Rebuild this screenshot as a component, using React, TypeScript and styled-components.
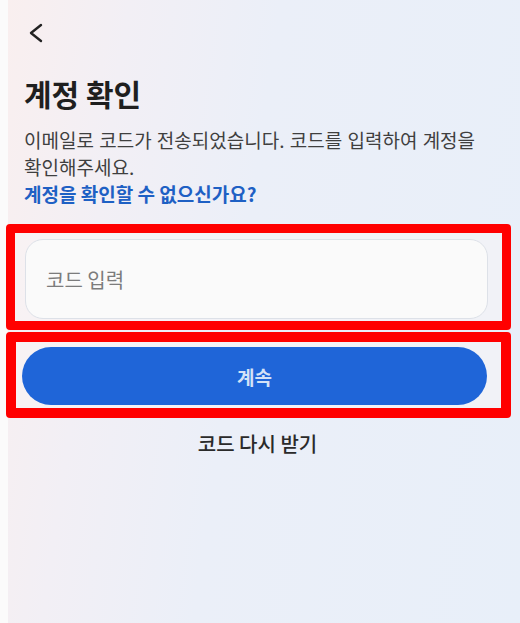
import React from "react";
import styled, { createGlobalStyle } from "styled-components";

const Global = createGlobalStyle`
  html, body { margin: 0; padding: 0; }
  body {
    width: 520px;
    height: 623px;
    overflow: hidden;
    font-family: "Noto Sans CJK KR", "Noto Sans", sans-serif;
    background: #fafafa;
  }
`;

const Page = styled.div`
  display: flex;
  width: 520px;
  height: 623px;
`;

const Gutter = styled.div<{ $side: "left" | "right" }>`
  width: ${(p) => (p.$side === "left" ? 8 : 7)}px;
  flex-shrink: 0;
  background: #fbfbfb;
  border-left: ${(p) => (p.$side === "right" ? "1px solid #dcdcdc" : "none")};
`;

const Screen = styled.div`
  flex: 1;
  display: flex;
  flex-direction: column;
  background: linear-gradient(98deg, #f9efef 0%, #f2eff5 20%, #ebeff8 45%, #e8eff9 100%);
  padding: 20px 0 0;
`;

const Content = styled.div`
  display: flex;
  flex-direction: column;
  padding: 0 16px;
`;

const BackButton = styled.button`
  border: none;
  background: none;
  padding: 0;
  margin: 0 0 0 4px;
  width: 20px;
  height: 26px;
  display: flex;
  align-items: center;
  cursor: pointer;
`;

const Title = styled.h1`
  margin: 27px 0 0;
  font-size: 30px;
  font-weight: 700;
  color: #1f1f1f;
  line-height: 40px;
`;

const Desc = styled.p`
  margin: 13px 0 0;
  max-width: 472px;
  font-size: 19px;
  line-height: 27px;
  letter-spacing: 0;
  word-spacing: 1px;
  word-break: keep-all;
  color: #3f3f3f;
`;

const HelpLink = styled.a`
  display: block;
  font-size: 19px;
  line-height: 27px;
  font-weight: 700;
  color: #1e60c4;
  text-decoration: none;
  word-break: keep-all;
`;

const Highlight = styled.div<{ $top: number; $border: number; $pad: string }>`
  margin: ${(p) => p.$top}px 0 0 -18px;
  width: 505px;
  box-sizing: border-box;
  border: ${(p) => p.$border}px solid #ff0000;
  border-radius: 4px;
  padding: ${(p) => p.$pad};
  background: rgba(250, 245, 246, 0.5);
`;

const CodeInput = styled.input`
  display: block;
  width: 100%;
  height: 80px;
  box-sizing: border-box;
  border: 1.5px solid #dde1e8;
  border-radius: 18px;
  background: #fafafa;
  padding: 0 20px;
  font-family: inherit;
  font-size: 20px;
  color: #222;
  outline: none;
  &::placeholder { color: #7c7c7c; }
`;

const PrimaryButton = styled.button`
  display: block;
  width: 100%;
  height: 58px;
  border: none;
  border-radius: 29px;
  background: #1f65d8;
  color: #d4e2f7;
  font-family: inherit;
  font-size: 19px;
  font-weight: 700;
  cursor: pointer;
`;

const TextButton = styled.button`
  align-self: center;
  margin: 7px 20px 0 0;
  border: none;
  background: none;
  font-family: inherit;
  font-size: 20px;
  line-height: 29px;
  font-weight: 500;
  color: #2a2a2a;
  cursor: pointer;
  padding: 4px 8px;
`;

export default function App() {
  return (
    <>
      <Global />
      <Page>
        <Gutter $side="left" />
        <Screen>
          <Content>
            <BackButton aria-label="뒤로">
              <svg width="16" height="20" viewBox="0 0 16 20" fill="none">
                <path d="M13 2 L3 10 L13 18" stroke="#222" strokeWidth="2.4" strokeLinecap="round" strokeLinejoin="round" />
              </svg>
            </BackButton>
            <Title>계정 확인</Title>
            <Desc>이메일로 코드가 전송되었습니다. 코드를 입력하여 계정을 확인해주세요.</Desc>
            <HelpLink href="#">계정을 확인할 수 없으신가요?</HelpLink>
            <Highlight $top={17} $border={9} $pad="6px 14px 2px 10px">
              <CodeInput placeholder="코드 입력" />
            </Highlight>
            <Highlight $top={2} $border={10} $pad="5px 14px 3px 6px">
              <PrimaryButton>계속</PrimaryButton>
            </Highlight>
            <TextButton>코드 다시 받기</TextButton>
          </Content>
        </Screen>
        <Gutter $side="right" />
      </Page>
    </>
  );
}
